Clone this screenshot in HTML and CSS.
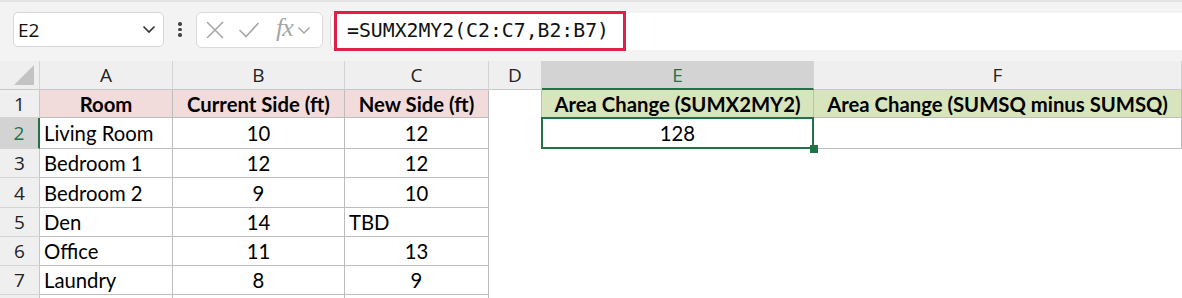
FILE: index.html
```html
<!DOCTYPE html>
<html>
<head>
<meta charset="utf-8">
<link rel="stylesheet" href="styles.css">
</head>
<body>
<div class="toolbar">
  <div class="namebox">
    <span class="nb-text">E2</span>
    <svg class="chev" width="14" height="9" viewBox="0 0 14 9"><path d="M1.5 1.5 L7 7 L12.5 1.5" fill="none" stroke="#333" stroke-width="1.6"/></svg>
  </div>
  <div class="dots"><i></i><i></i><i></i></div>
  <div class="fxbox">
    <svg width="20" height="20" viewBox="0 0 20 20"><path d="M2 2 L18 18 M18 2 L2 18" stroke="#a6a6a6" stroke-width="1.6" fill="none"/></svg>
    <svg width="22" height="18" viewBox="0 0 22 18"><path d="M1.5 9 L8 15.5 L20.5 2" stroke="#a6a6a6" stroke-width="1.6" fill="none"/></svg>
    <span class="fx">fx</span>
    <svg width="14" height="9" viewBox="0 0 14 9"><path d="M1.5 1.5 L7 7 L12.5 1.5" fill="none" stroke="#a6a6a6" stroke-width="1.5"/></svg>
  </div>
  <div class="formulabar">
    <div class="formula">=SUMX2MY2(C2:C7,B2:B7)</div>
  </div>
</div>
<div class="sheet">
  <div class="ch corner"><span class="tri"></span></div>
  <div class="ch">A</div>
  <div class="ch">B</div>
  <div class="ch">C</div>
  <div class="ch">D</div>
  <div class="ch sel">E</div>
  <div class="ch">F</div>

  <div class="rh">1</div>
  <div class="c b pink hd">Room</div>
  <div class="c b pink hd">Current Side (ft)</div>
  <div class="c b pink hd">New Side (ft)</div>
  <div class="c dr"></div>
  <div class="c b green hd">Area Change (SUMX2MY2)</div>
  <div class="c b green hd">Area Change (SUMSQ minus SUMSQ)</div>

  <div class="rh rsel">2</div>
  <div class="c b l">Living Room</div>
  <div class="c b">10</div>
  <div class="c b">12</div>
  <div class="c dr"></div>
  <div class="c b active">128<span class="handle"></span></div>
  <div class="c b"></div>

  <div class="rh">3</div>
  <div class="c b l">Bedroom 1</div>
  <div class="c b">12</div>
  <div class="c b">12</div>
  <div class="c e"></div>

  <div class="rh">4</div>
  <div class="c b l">Bedroom 2</div>
  <div class="c b">9</div>
  <div class="c b">10</div>
  <div class="c e"></div>

  <div class="rh">5</div>
  <div class="c b l">Den</div>
  <div class="c b">14</div>
  <div class="c b l">TBD</div>
  <div class="c e"></div>

  <div class="rh">6</div>
  <div class="c b l">Office</div>
  <div class="c b">11</div>
  <div class="c b">13</div>
  <div class="c e"></div>

  <div class="rh">7</div>
  <div class="c b l">Laundry</div>
  <div class="c b">8</div>
  <div class="c b">9</div>
  <div class="c e"></div>

  <div class="rh last"></div>
  <div class="c lastcell"></div>
  <div class="c lastcell"></div>
  <div class="c lastcell"></div>
  <div class="c e"></div>
</div>
</body>
</html>
```
FILE: styles.css
```css
* { box-sizing: border-box; }
html, body { margin: 0; padding: 0; background: #fff; overflow: hidden; }
body { width: 1182px; height: 298px; font-family: "Lato", "Open Sans", sans-serif; color: #000; }

.toolbar {
  height: 61px;
  background: #f3f3f3;
  border-top: 2px solid #e4e4e4;
  display: flex;
  align-items: flex-start;
  padding-top: 10px;
  padding-left: 13px;
}
.namebox {
  width: 151px;
  height: 35px;
  background: #fff;
  border: 1px solid #d6d6d6;
  border-radius: 5px;
  display: flex;
  align-items: center;
  justify-content: space-between;
  padding: 0 7px 0 4px;
}
.nb-text { font-family: "Open Sans", sans-serif; font-size: 19px; color: #111; }
.dots {
  width: 32px;
  height: 35px;
  display: flex;
  flex-direction: column;
  align-items: center;
  justify-content: center;
  gap: 2px;
}
.dots i { width: 3.5px; height: 3.5px; background: #444; border-radius: 50%; display: block; }
.fxbox {
  width: 127px;
  height: 36px;
  background: #fff;
  border: 1px solid #dadada;
  border-radius: 6px;
  display: flex;
  align-items: center;
  padding-left: 8px;
  gap: 0;
}
.fxbox svg:nth-child(1) { margin-right: 13px; }
.fxbox svg:nth-child(2) { margin-right: 16px; }
.fx {
  font-family: "Liberation Serif", serif;
  font-style: italic;
  font-size: 26px;
  color: #a6a6a6;
  margin-right: 4px;
  line-height: 1;
  margin-top: -4px;
  letter-spacing: -1px;
}
.formulabar {
  flex: 1;
  margin-left: 7px;
  height: 37px;
  margin-top: 1px;
  background: #fff;
  border-left: 1px solid #dadada;
  border-radius: 6px 0 0 6px;
  position: relative;
}
.formula {
  position: absolute;
  left: 3px;
  top: -2px;
  width: 292px;
  height: 40px;
  border: 3px solid #e0204a;
  font-family: "DejaVu Sans Mono", "Liberation Mono", monospace;
  font-size: 19.8px;
  letter-spacing: 0;
  line-height: 34px;
  padding-left: 10px;
  color: #111;
}

.sheet {
  display: grid;
  grid-template-columns: 40px 133px 172px 144px 53px 272px 368px;
  grid-template-rows: 29px 28px 31px 29px 30px 29px 29px 29px 10px;
}
.ch {
  background: #efefef;
  border-right: 1px solid #d4d4d4;
  border-bottom: 1px solid #c8c8c8;
  display: flex;
  align-items: center;
  justify-content: center;
  font-family: "Open Sans", sans-serif;
  font-size: 19px;
  color: #222;
}
.ch.sel { background: #d3d3d3; color: #217346; border-bottom: 2px solid #217346; }
.corner { position: relative; }
.tri {
  position: absolute;
  right: 5px;
  bottom: 4px;
  width: 0;
  height: 0;
  border-left: 20px solid transparent;
  border-bottom: 20px solid #c3c3c3;
}
.rh {
  background: #efefef;
  border-right: 1px solid #c8c8c8;
  border-bottom: 1px solid #d4d4d4;
  display: flex;
  align-items: center;
  justify-content: center;
  font-family: "Open Sans", sans-serif;
  font-size: 19px;
  color: #222;
}
.rh.rsel { background: #d3d3d3; color: #217346; border-right: 2px solid #217346; }
.c {
  display: flex;
  align-items: center;
  justify-content: center;
  font-size: 20.3px;
  white-space: nowrap;
  overflow: visible;
}
.b { border-right: 1px solid #bdbdbd; border-bottom: 1px solid #bdbdbd; }
.l { justify-content: flex-start; padding-left: 4px; }
.hd { font-weight: 700; }
.pink { background: #f2dcdb; }
.green { background: #d8e4bc; }
.dr { border-right: 1px solid #bdbdbd; }
.e { grid-column: 5 / 8; }
.lastcell { border-right: 1px solid #bdbdbd; }
.active { position: relative; }
.active::after {
  content: "";
  position: absolute;
  left: -1px;
  top: -1px;
  right: -1px;
  bottom: -1px;
  border: 2px solid #217346;
}
.handle {
  position: absolute;
  right: -5px;
  bottom: -5px;
  width: 8px;
  height: 8px;
  background: #217346;
  z-index: 3;
}
```
